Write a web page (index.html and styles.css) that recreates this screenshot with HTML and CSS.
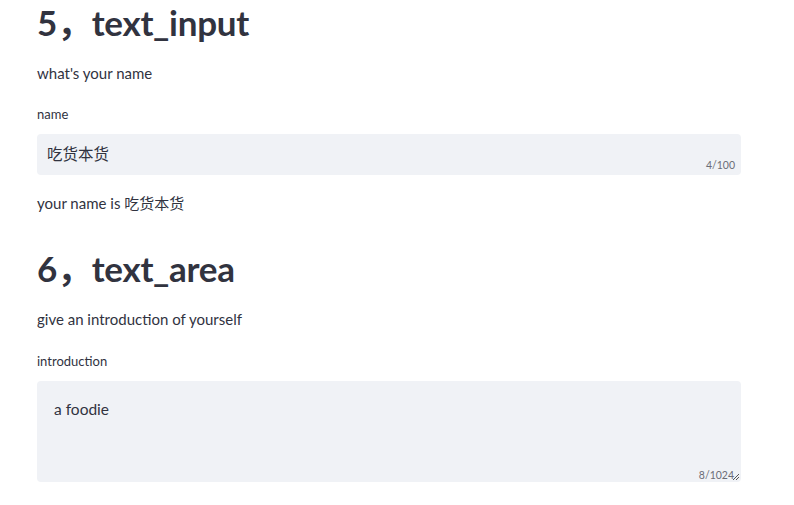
FILE: index.html
```html
<!DOCTYPE html>
<html lang="en">
<head>
<meta charset="utf-8">
<link rel="stylesheet" href="styles.css">
</head>
<body>
<main class="page">
  <h2 class="heading">5，text_input</h2>
  <p class="text">what's your name</p>
  <div class="field">
    <label class="label">name</label>
    <div class="input">
      <span class="value">吃货本货</span>
      <span class="counter">4/100</span>
    </div>
  </div>
  <p class="text text-after">your name is 吃货本货</p>

  <h2 class="heading heading-2">6，text_area</h2>
  <p class="text">give an introduction of yourself</p>
  <div class="field field-area">
    <label class="label">introduction</label>
    <div class="textarea">
      <span class="value">a foodie</span>
      <span class="counter">8/1024</span>
      <svg class="grip" width="8" height="8" viewBox="0 0 8 8"><path d="M7 1 L1 7 M7 4 L4 7" stroke="#555" stroke-width="1"/></svg>
    </div>
  </div>
</main>
</body>
</html>
```
FILE: styles.css
```css
* { box-sizing: border-box; }
html, body { margin: 0; padding: 0; background: #fff; }
body {
  font-family: Lato, "Noto Sans CJK SC", sans-serif;
  color: #31333f;
}
.page {
  width: 704px;
  margin-left: 37px;
  display: flex;
  flex-direction: column;
}
.heading {
  margin: 0;
  font-size: 35px;
  font-weight: 700;
  line-height: 44px;
  height: 44px;
  letter-spacing: -0.3px;
}
.heading-2 { margin-top: 31px; }
.text {
  margin: 17px 0 0;
  font-size: 15px;
  line-height: 24px;
}
.text-after { margin-top: 16px; }
.field { margin-top: 19px; display: flex; flex-direction: column; }
.field-area { margin-top: 20px; }
.label { font-size: 13px; line-height: 20px; margin-bottom: 10px; }
.input, .textarea {
  position: relative;
  background: #f0f2f6;
  border-radius: 4px;
  width: 704px;
}
.input { height: 41px; padding: 8px 10px; }
.textarea { height: 101px; padding: 16px 17px; }
.value { font-size: 15.5px; line-height: 24px; }
.counter {
  position: absolute;
  right: 6px;
  bottom: 4px;
  font-size: 10.5px;
  color: #6b6d76;
}
.textarea .counter { right: 7px; bottom: 1px; }
.grip { position: absolute; right: 1px; bottom: 1px; }
```
